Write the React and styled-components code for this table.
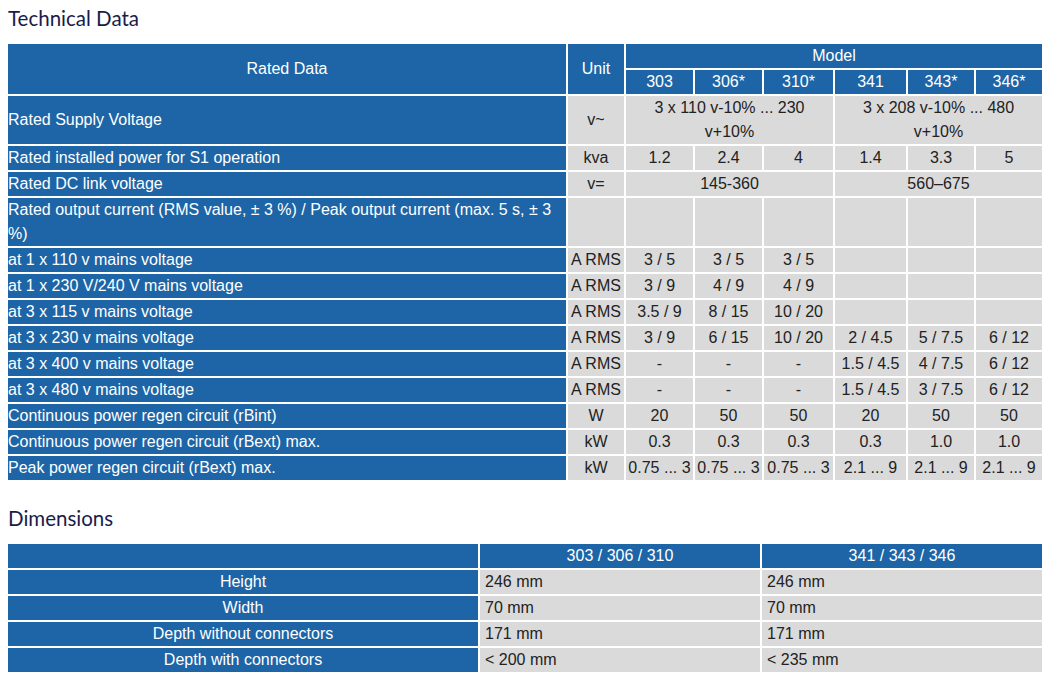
import React from "react";
import styled, { createGlobalStyle } from "styled-components";

const Global = createGlobalStyle`
  html, body { margin: 0; padding: 0; background: #fff; }
  body { font-family: "Liberation Sans", Arial, sans-serif; }
`;

const BLUE = "#1d65a6";
const GRAY = "#dadada";

const Page = styled.div`
  width: 1060px;
  padding: 0 6px;
  box-sizing: border-box;
`;

const Title = styled.h2`
  margin: 0;
  padding: ${(p) => (p.$small ? "0 2px 0" : "6px 2px 0")};
  height: ${(p) => (p.$small ? "36px" : "42px")};
  font-family: Lato, "Open Sans", sans-serif;
  font-weight: 400;
  font-size: 20.5px;
  line-height: 24px;
  color: #191c4a;
  box-sizing: border-box;
`;

const Table = styled.table`
  width: 1038px;
  table-layout: fixed;
  border-collapse: separate;
  border-spacing: 2px;
  font-family: "Liberation Sans", Arial, sans-serif;
  font-size: 16px;
  line-height: 24px;
  margin-bottom: ${(p) => p.$mb || 0}px;
`;

const Head = styled.th`
  background: ${BLUE};
  color: #fff;
  font-weight: 400;
  text-align: center;
  padding: 0;
  height: 24px;
`;

const Label = styled.td`
  background: ${BLUE};
  color: #fff;
  text-align: ${(p) => (p.$center ? "center" : "left")};
  padding: 0;
  height: 24px;
  vertical-align: middle;
`;

const Cell = styled.td`
  background: ${GRAY};
  color: #222;
  text-align: ${(p) => (p.$left ? "left" : "center")};
  padding: ${(p) => (p.$left ? "0 5px" : "0 2px")};
  height: 24px;
  white-space: ${(p) => (p.$nowrap ? "nowrap" : "normal")};
  vertical-align: middle;
`;

const techCols = [558, 56, 67, 67, 69, 71, 66, 66];

const rows = [
  ["Rated installed power for S1 operation", "kva", ["1.2", "2.4", "4", "1.4", "3.3", "5"]],
  ["Rated DC link voltage", "v=", [{ v: "145-360", span: 3 }, { v: "560–675", span: 3 }]],
  ["Rated output current (RMS value, ± 3 %) / Peak output current (max. 5 s, ± 3 %)", "", ["", "", "", "", "", ""]],
  ["at 1 x 110 v mains voltage", "A RMS", ["3 / 5", "3 / 5", "3 / 5", "", "", ""]],
  ["at 1 x 230 V/240 V mains voltage", "A RMS", ["3 / 9", "4 / 9", "4 / 9", "", "", ""]],
  ["at 3 x 115 v mains voltage", "A RMS", ["3.5 / 9", "8 / 15", "10 / 20", "", "", ""]],
  ["at 3 x 230 v mains voltage", "A RMS", ["3 / 9", "6 / 15", "10 / 20", "2 / 4.5", "5 / 7.5", "6 / 12"]],
  ["at 3 x 400 v mains voltage", "A RMS", ["-", "-", "-", "1.5 / 4.5", "4 / 7.5", "6 / 12"]],
  ["at 3 x 480 v mains voltage", "A RMS", ["-", "-", "-", "1.5 / 4.5", "3 / 7.5", "6 / 12"]],
  ["Continuous power regen circuit (rBint)", "W", ["20", "50", "50", "20", "50", "50"]],
  ["Continuous power regen circuit (rBext) max.", "kW", ["0.3", "0.3", "0.3", "0.3", "1.0", "1.0"]],
  ["Peak power regen circuit (rBext) max.", "kW", ["0.75 ... 3", "0.75 ... 3", "0.75 ... 3", "2.1 ... 9", "2.1 ... 9", "2.1 ... 9"]],
];

const dims = [
  ["Height", "246 mm", "246 mm"],
  ["Width", "70 mm", "70 mm"],
  ["Depth without connectors", "171 mm", "171 mm"],
  ["Depth with connectors", "< 200 mm", "< 235 mm"],
];

export default function App() {
  return (
    <Page>
      <Global />
      <Title>Technical Data</Title>
      <Table $mb={24}>
        <colgroup>
          {techCols.map((w, i) => (
            <col key={i} style={{ width: w }} />
          ))}
        </colgroup>
        <thead>
          <tr>
            <Head rowSpan={2}>Rated Data</Head>
            <Head rowSpan={2}>Unit</Head>
            <Head colSpan={6}>Model</Head>
          </tr>
          <tr>
            {["303", "306*", "310*", "341", "343*", "346*"].map((m) => (
              <Head key={m}>{m}</Head>
            ))}
          </tr>
        </thead>
        <tbody>
          <tr>
            <Label>Rated Supply Voltage</Label>
            <Cell>v~</Cell>
            <Cell colSpan={3}>3 x 110 v-10% ... 230 v+10%</Cell>
            <Cell colSpan={3}>3 x 208 v-10% ... 480 v+10%</Cell>
          </tr>
          {rows.map(([label, unit, vals]) => (
            <tr key={label}>
              <Label>{label}</Label>
              <Cell $nowrap>{unit}</Cell>
              {vals.map((v, i) =>
                typeof v === "object" ? (
                  <Cell key={i} colSpan={v.span}>{v.v}</Cell>
                ) : (
                  <Cell key={i} $nowrap>{v}</Cell>
                )
              )}
            </tr>
          ))}
        </tbody>
      </Table>
      <Title $small>Dimensions</Title>
      <Table>
        <colgroup>
          <col style={{ width: 470 }} />
          <col style={{ width: 280 }} />
          <col style={{ width: 280 }} />
        </colgroup>
        <thead>
          <tr>
            <Head />
            <Head>303 / 306 / 310</Head>
            <Head>341 / 343 / 346</Head>
          </tr>
        </thead>
        <tbody>
          {dims.map(([l, a, b]) => (
            <tr key={l}>
              <Label $center>{l}</Label>
              <Cell $left>{a}</Cell>
              <Cell $left>{b}</Cell>
            </tr>
          ))}
        </tbody>
      </Table>
    </Page>
  );
}
